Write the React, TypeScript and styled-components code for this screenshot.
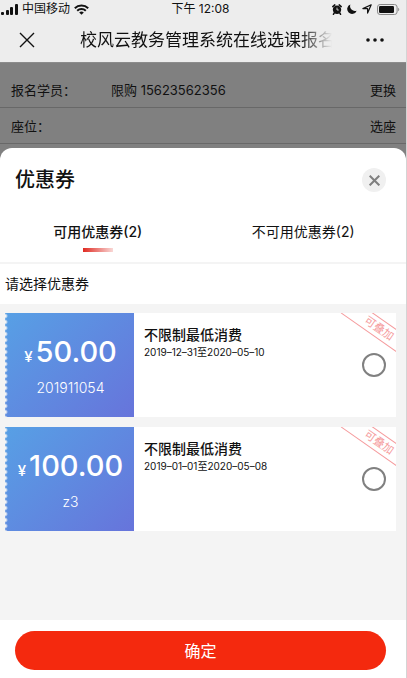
import { useState } from "react";
import styled, { createGlobalStyle } from "styled-components";

const GlobalStyle = createGlobalStyle`
  *, *::before, *::after { box-sizing: border-box; }
  body {
    margin: 0;
    background: #808080;
    color: #111;
    font-family: Inter, "Noto Sans CJK SC", sans-serif;
    font-size: 13px;
  }
  button { font: inherit; color: inherit; border: 0; padding: 0; background: none; cursor: pointer; }
  h1, h2, h3, p { margin: 0; }
`;

const Screen = styled.div`
  display: flex;
  flex-direction: column;
  min-height: 100vh;
  border-right: 1px solid #d4d4d4;
`;

const TopChrome = styled.header`
  background: #ededed;
  border-bottom: 1px solid #8c8c8c;
`;

const StatusBar = styled.div`
  display: grid;
  grid-template-columns: 1fr auto 1fr;
  align-items: center;
  height: 18px;
  padding: 0 6px 0 1px;
  font-size: 12px;
  line-height: 18px;
`;

const StatusGroup = styled.div<{ $end?: boolean }>`
  display: flex;
  align-items: center;
  justify-content: ${(p) => (p.$end ? "flex-end" : "flex-start")};
  gap: ${(p) => (p.$end ? 5 : 4)}px;
`;

const NavBar = styled.nav`
  display: flex;
  align-items: center;
  height: 44px;
  padding: 0 22px 0 19px;
`;

const NavTitle = styled.h1`
  flex: 1;
  margin: 0 28px 0 45px;
  white-space: nowrap;
  font-size: 17px;
  line-height: 24px;
  font-weight: 400;
  mask-image: linear-gradient(to right, #000 calc(100% - 38px), transparent calc(100% - 6px));
`;

const IconButton = styled.button`
  display: flex;
`;

const FormList = styled.section`
  padding-top: 9px;
`;

const FormRow = styled.div`
  display: flex;
  align-items: center;
  height: 36px;
  padding: 0 10px 0 11px;
  border-bottom: 1px solid #686868;
`;

const FormLabel = styled.span`
  width: 100px;
`;

const FormValue = styled.span`
  flex: 1;
`;

const Sheet = styled.section`
  display: flex;
  flex: 1;
  flex-direction: column;
  margin-top: 4px;
  overflow: hidden;
  background: #fff;
  border-radius: 12px 12px 0 0;
`;

const SheetHeader = styled.div`
  display: flex;
  align-items: center;
  justify-content: space-between;
  height: 64px;
  padding: 0 20px 0 15px;
`;

const SheetTitle = styled.h2`
  font-size: 20px;
  line-height: 28px;
  font-weight: 500;
`;

const CloseButton = styled(IconButton)`
  align-items: center;
  justify-content: center;
  width: 24px;
  height: 24px;
  border-radius: 50%;
  background: #f0f0f0;
`;

const Tabs = styled.div`
  display: grid;
  grid-template-columns: 1fr 1fr;
  height: 52px;
  margin-left: -5px;
  border-bottom: 2px solid #f4f4f4;
`;

const Tab = styled.button<{ $active: boolean }>`
  display: flex;
  flex-direction: column;
  align-items: center;
  padding-top: 10px;
  font-size: 14px;
  line-height: 20px;
  font-weight: ${(p) => (p.$active ? 500 : 400)};

  &::after {
    content: "";
    width: 30px;
    height: 4px;
    margin-top: 6px;
    background: ${(p) => (p.$active ? "linear-gradient(to right, #e02a22, #f9d8d6)" : "none")};
  }
`;

const Hint = styled.p`
  padding: 10px 5px;
  font-size: 14px;
  line-height: 20px;
`;

const CouponList = styled.div`
  display: flex;
  flex: 1;
  flex-direction: column;
  gap: 10px;
  padding: 9px 10px 16px 5px;
  background: #f4f4f4;
`;

const CouponCard = styled.label`
  position: relative;
  display: flex;
  height: 104px;
  overflow: hidden;
  background: #fff;
  cursor: pointer;
`;

const CouponFace = styled.div`
  display: flex;
  flex-direction: column;
  align-items: center;
  width: 129px;
  padding: 21px 0 0 2px;
  color: #fff;
  background:
    radial-gradient(circle at 0 50%, #f4f4f4 1px, transparent 3px) 0 0 / 4px 6px repeat-y,
    linear-gradient(135deg, #57a0e5, #6774db);
`;

const Amount = styled.div`
  display: flex;
  align-items: baseline;
  gap: 3px;
  font-size: 29px;
  line-height: 36px;
  font-weight: 500;
`;

const Currency = styled.span`
  font-size: 15px;
`;

const CouponCode = styled.div`
  margin-top: 3px;
  font-size: 14px;
  line-height: 20px;
  font-weight: 300;
`;

const CouponInfo = styled.div`
  flex: 1;
  padding: 12px 10px;
`;

const CouponName = styled.h3`
  font-size: 14px;
  line-height: 20px;
  font-weight: 500;
`;

const CouponDates = styled.p`
  font-size: 10px;
  line-height: 14px;
`;

const Ribbon = styled.span`
  position: absolute;
  top: 6px;
  right: -23px;
  width: 80px;
  height: 19px;
  border: solid #f59a9c;
  border-width: 1px 0;
  color: #f59a9c;
  font-size: 11px;
  line-height: 17px;
  text-align: center;
  transform: rotate(35deg);
`;

const CouponCheck = styled.input`
  appearance: none;
  align-self: center;
  width: 24px;
  height: 24px;
  margin: 0 10px 0 0;
  border: 2px solid #808080;
  border-radius: 50%;
  cursor: pointer;

  &:checked {
    border-color: #f4290e;
    background: radial-gradient(circle, #f4290e 6px, transparent 7px);
  }
`;

const Footer = styled.footer`
  padding: 11px 20px 8px 15px;
`;

const ConfirmButton = styled.button`
  width: 100%;
  height: 39px;
  border-radius: 20px;
  background: #f4290e;
  color: #fff;
  font-size: 16px;
  line-height: 24px;
`;

const SignalIcon = () => (
  <svg width="17" height="11" viewBox="0 0 17 11" fill="#111">
    <rect x="0" y="8" width="3" height="3" rx="1" />
    <rect x="5" y="6" width="3" height="5" rx="1" />
    <rect x="9" y="3" width="3" height="8" rx="1" />
    <rect x="14" y="0" width="3" height="11" rx="1" />
  </svg>
);

const WifiIcon = () => (
  <svg width="15" height="11" viewBox="0 0 15 11" fill="none" stroke="#111" strokeWidth="2">
    <path d="M.8 4.2a9.6 9.6 0 0 1 13.4 0" />
    <path d="M3.2 6.8a6.2 6.2 0 0 1 8.6 0" />
    <path d="M7.5 10.8 5.2 8.6a3.3 3.3 0 0 1 4.6 0z" fill="#111" stroke="none" />
  </svg>
);

const AlarmIcon = () => (
  <svg width="10" height="11" viewBox="0 0 10 11">
    <circle cx="5" cy="5.8" r="4.2" fill="#111" />
    <path d="M.8 2.6 2.8.9M9.2 2.6 7.2.9M2.2 9 1.4 10.3M7.8 9l.8 1.3" stroke="#111" strokeWidth="1.5" strokeLinecap="round" />
    <path d="M5 3.6v2.4h1.8" stroke="#ededed" strokeWidth=".8" fill="none" />
  </svg>
);

const MoonIcon = () => (
  <svg width="10" height="10" viewBox="0 0 10 10" fill="#111">
    <path d="M3.4.4A4.9 4.9 0 1 0 9.7 6.7 4.9 4.9 0 0 1 3.4.4z" />
  </svg>
);

const LocationIcon = () => (
  <svg width="10" height="10" viewBox="0 0 10 10" fill="none" stroke="#111" strokeWidth="1.2" strokeLinejoin="round">
    <path d="M9.2.8 5.6 9.1V4.6H.9z" />
  </svg>
);

const BatteryIcon = () => (
  <svg width="23" height="11" viewBox="0 0 23 11">
    <rect x=".5" y=".5" width="19.6" height="10" rx="2.6" fill="none" stroke="#888" />
    <rect x="2" y="2" width="15" height="7" rx="1.2" fill="#111" />
    <path d="M21.2 3.8v3.4c1.4-.5 1.4-2.9 0-3.4z" fill="#888" />
  </svg>
);

const CrossIcon = ({ size, color, weight }: { size: number; color: string; weight: number }) => (
  <svg width={size} height={size} viewBox="0 0 16 16" stroke={color} strokeWidth={weight}>
    <path d="M1 1 15 15M15 1 1 15" />
  </svg>
);

const MoreIcon = () => (
  <svg width="18" height="4" viewBox="0 0 18 4" fill="#111">
    <circle cx="2" cy="2" r="1.8" />
    <circle cx="9" cy="2" r="1.8" />
    <circle cx="16" cy="2" r="1.8" />
  </svg>
);

const coupons = [
  { code: "201911054", amount: "50.00", name: "不限制最低消费", dates: "2019–12–31至2020–05–10" },
  { code: "z3", amount: "100.00", name: "不限制最低消费", dates: "2019–01–01至2020–05–08" },
];

const tabs = ["可用优惠券(2)", "不可用优惠券(2)"];

export default function App() {
  const [activeTab, setActiveTab] = useState(0);

  return (
    <>
      <GlobalStyle />
      <Screen>
        <TopChrome>
          <StatusBar>
            <StatusGroup>
              <SignalIcon />
              <span>中国移动</span>
              <WifiIcon />
            </StatusGroup>
            <span>下午 12:08</span>
            <StatusGroup $end>
              <AlarmIcon />
              <MoonIcon />
              <LocationIcon />
              <BatteryIcon />
            </StatusGroup>
          </StatusBar>
          <NavBar>
            <IconButton aria-label="关闭页面">
              <CrossIcon size={16} color="#111" weight={1.4} />
            </IconButton>
            <NavTitle>校风云教务管理系统在线选课报名</NavTitle>
            <IconButton aria-label="更多">
              <MoreIcon />
            </IconButton>
          </NavBar>
        </TopChrome>

        <FormList>
          <FormRow>
            <FormLabel>报名学员：</FormLabel>
            <FormValue>限购 15623562356</FormValue>
            <button>更换</button>
          </FormRow>
          <FormRow>
            <FormLabel>座位：</FormLabel>
            <FormValue />
            <button>选座</button>
          </FormRow>
        </FormList>

        <Sheet>
          <SheetHeader>
            <SheetTitle>优惠券</SheetTitle>
            <CloseButton aria-label="关闭">
              <CrossIcon size={11} color="#808080" weight={3} />
            </CloseButton>
          </SheetHeader>
          <Tabs role="tablist">
            {tabs.map((tab, index) => (
              <Tab
                key={tab}
                role="tab"
                aria-selected={index === activeTab}
                $active={index === activeTab}
                onClick={() => setActiveTab(index)}
              >
                {tab}
              </Tab>
            ))}
          </Tabs>
          <Hint>请选择优惠券</Hint>
          <CouponList>
            {coupons.map((coupon) => (
              <CouponCard key={coupon.code}>
                <CouponFace>
                  <Amount>
                    <Currency>¥</Currency>
                    {coupon.amount}
                  </Amount>
                  <CouponCode>{coupon.code}</CouponCode>
                </CouponFace>
                <CouponInfo>
                  <CouponName>{coupon.name}</CouponName>
                  <CouponDates>{coupon.dates}</CouponDates>
                </CouponInfo>
                <Ribbon>可叠加</Ribbon>
                <CouponCheck type="checkbox" name="coupon" value={coupon.code} />
              </CouponCard>
            ))}
          </CouponList>
          <Footer>
            <ConfirmButton>确定</ConfirmButton>
          </Footer>
        </Sheet>
      </Screen>
    </>
  );
}
